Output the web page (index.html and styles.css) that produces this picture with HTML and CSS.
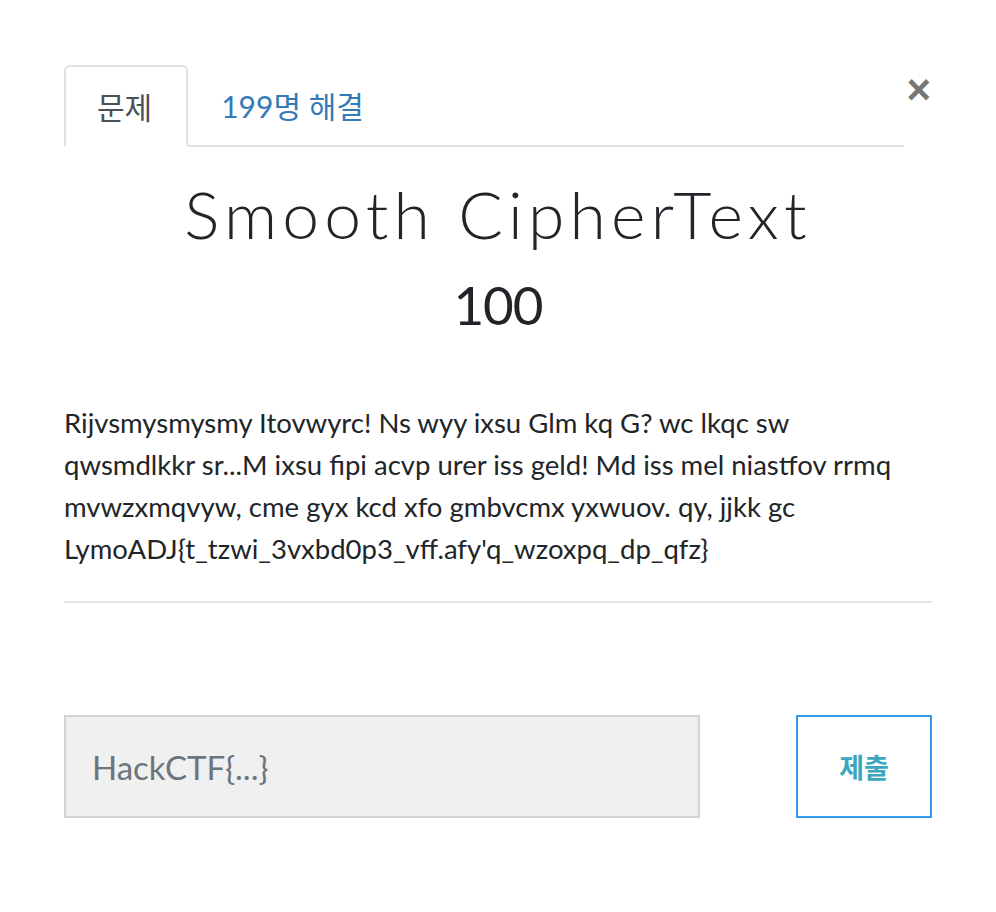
FILE: index.html
```html
<!DOCTYPE html>
<html lang="ko">
<head>
<meta charset="utf-8">
<link rel="stylesheet" href="styles.css">
</head>
<body>
<div class="modal">
  <button class="close" aria-label="Close">&times;</button>
  <ul class="tabs">
    <li class="tab active">문제</li>
    <li class="tab link">199명 해결</li>
  </ul>
  <h3 class="name">Smooth CipherText</h3>
  <h4 class="value">100</h4>
  <p class="desc">Rijvsmysmysmy Itovwyrc! Ns wyy ixsu Glm kq G? wc lkqc sw qwsmdlkkr sr...M ixsu fipi acvp urer iss geld! Md iss mel niastfov rrmq mvwzxmqvyw, cme gyx kcd xfo gmbvcmx yxwuov. qy, jjkk gc LymoADJ{t_tzwi_3vxbd0p3_vff.afy'q_wzoxpq_dp_qfz}</p>
  <hr class="rule">
  <form class="submit-row">
    <input class="answer" type="text" placeholder="HackCTF{...}">
    <button class="submit" type="button">제출</button>
  </form>
</div>
</body>
</html>
```

FILE: styles.css
```css
html, body {
  margin: 0;
  padding: 0;
  background: #fff;
}
body {
  font-family: Lato, "Noto Sans CJK KR", sans-serif;
  color: #212529;
}
.modal {
  position: relative;
  padding: 65px 64px 0 64px;
}
.close {
  position: absolute;
  top: 69px;
  right: 65px;
  border: 0;
  background: none;
  padding: 0;
  font-family: "Liberation Sans", sans-serif;
  font-size: 42px;
  font-weight: 700;
  line-height: 42px;
  color: #777;
  cursor: pointer;
}
.tabs {
  list-style: none;
  margin: 0 28px 0 0;
  padding: 0;
  display: flex;
  border-bottom: 2px solid #dee2e6;
}
.tab {
  font-family: Lato, "Noto Sans CJK KR", sans-serif;
  font-size: 30px;
  height: 80px;
  box-sizing: border-box;
  display: flex;
  align-items: center;
  margin-bottom: -2px;
  border: 2px solid transparent;
  border-top-left-radius: 6px;
  border-top-right-radius: 6px;
}
.tab.active {
  color: #495057;
  border-color: #dee2e6 #dee2e6 #fff;
  background: #fff;
  height: 82px;
  padding: 0 34px 0 31px;
}
.tab.link {
  color: #337ab7;
  padding: 0 31px;
}
.name {
  margin: 27px 0 0;
  text-align: center;
  font-family: Lato, sans-serif;
  font-weight: 300;
  font-size: 66px;
  letter-spacing: 5.2px;
  line-height: 80px;
  color: #212529;
}
.value {
  margin: 19px 0 0;
  text-align: center;
  font-family: Lato, sans-serif;
  font-weight: 400;
  font-size: 53px;
  letter-spacing: -1px;
  line-height: 64px;
  color: #212529;
}
.desc {
  margin: 65px 28px 0 0;
  font-size: 27.5px;
  line-height: 42px;
  color: #212529;
}
.rule {
  margin: 31px 0 0;
  border: 0;
  border-top: 2px solid #e5e5e5;
}
.submit-row {
  margin-top: 112px;
  display: flex;
  justify-content: space-between;
}
.answer {
  width: 636px;
  height: 103px;
  box-sizing: border-box;
  border: 2px solid #ced4da;
  background: #f0f0f0;
  padding: 0 26px;
  font-family: Lato, sans-serif;
  font-size: 33px;
  color: #495057;
  outline: none;
}
.answer::placeholder {
  color: #6c757d;
}
.submit {
  width: 136px;
  height: 103px;
  box-sizing: border-box;
  border: 2px solid #339af0;
  background: #fff;
  font-family: "Noto Sans CJK KR", sans-serif;
  font-weight: 700;
  font-size: 27px;
  color: #3aa7bf;
  cursor: pointer;
}
```
